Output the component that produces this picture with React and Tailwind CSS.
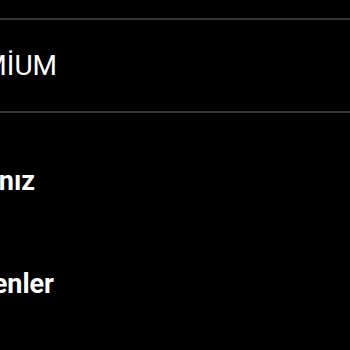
export default function App() {
  const rows = ["Hesabınız", "İndirilenler"];
  const ends = ["w-[35px]", "w-[54px]"];

  return (
    <div
      className="w-[350px] h-[350px] bg-black overflow-hidden text-white"
      style={{ fontFamily: "Roboto, 'Open Sans', sans-serif" }}
    >
      <div className="pt-[18px]">
        <div className="h-[2px] bg-[#343434]" />
        <div className="h-[91px] flex items-center">
          <div className="w-[57px] flex justify-end">
            <span className="shrink-0 whitespace-nowrap text-[28px] font-normal leading-none">
              PREMİUM
            </span>
          </div>
        </div>
        <div className="h-[2px] bg-[#343434]" />
      </div>

      <div className="pt-[17px]">
        {rows.map((r, i) => (
          <div key={r} className="h-[103px] flex items-center">
            <div className={`${ends[i]} flex justify-end`}>
              <span className="shrink-0 whitespace-nowrap text-[27px] font-bold leading-none">
                {r}
              </span>
            </div>
          </div>
        ))}
      </div>
    </div>
  );
}
